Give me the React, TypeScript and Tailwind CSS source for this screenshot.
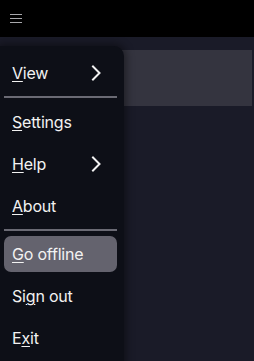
import React from "react";

const font = { fontFamily: "Inter, 'Noto Sans', sans-serif" };

function Chevron() {
  return (
    <svg width="10" height="16" viewBox="0 0 10 16" fill="none" className="shrink-0">
      <path d="M2 1.5 L8.5 8 L2 14.5" stroke="#f2f2f2" strokeWidth="2" strokeLinecap="square" />
    </svg>
  );
}

function Item({
  pre,
  u,
  post,
  sub,
  active,
  first,
}: {
  pre: string;
  u: string;
  post: string;
  sub?: boolean;
  active?: boolean;
  first?: boolean;
}) {
  return (
    <div
      className={`${first ? "" : "mt-[6px]"} h-9 flex items-center justify-between pl-[8px] pr-[16px] rounded-[7px] ${
        active ? "bg-[#64636e]" : ""
      }`}
    >
      <span className="text-[16px] leading-none text-[#f2f2f2] tracking-[-0.2px]">
        {pre}
        <span className="underline decoration-1 underline-offset-[2px]">{u}</span>
        {post}
      </span>
      {sub && <Chevron />}
    </div>
  );
}

function Sep() {
  return <div className="mt-[5px] h-[2px] bg-[#6a6a74]" />;
}

export default function App() {
  return (
    <div className="relative w-[254px] h-[361px] overflow-hidden bg-[#1a1b28]" style={font}>
      <div className="h-[37px] bg-black flex items-center pl-[10px]">
        <div className="flex flex-col gap-[3px]">
          <div className="w-[12px] h-px bg-[#a8a8ac]" />
          <div className="w-[12px] h-px bg-[#a8a8ac]" />
          <div className="w-[12px] h-px bg-[#a8a8ac]" />
        </div>
      </div>
      <div className="pt-[13px] pr-[2px]">
        <div className="h-[56px] bg-[#34343f]" />
      </div>

      <div className="absolute left-0 top-[46px] w-[124px] h-[330px] bg-[#0d0f17] rounded-tr-[10px] shadow-[0_0_8px_2px_rgba(0,0,0,0.45)] pt-[9px] pl-[4px] pr-[7px]">
        <Item pre="" u="V" post="iew" sub first />
        <Sep />
        <Item pre="" u="S" post="ettings" />
        <Item pre="" u="H" post="elp" sub />
        <Item pre="" u="A" post="bout" />
        <Sep />
        <div className="mt-[-1px]" />
        <Item pre="" u="G" post="o offline" active />
        <Item pre="Si" u="g" post="n out" />
        <Item pre="E" u="x" post="it" />
      </div>
    </div>
  );
}
